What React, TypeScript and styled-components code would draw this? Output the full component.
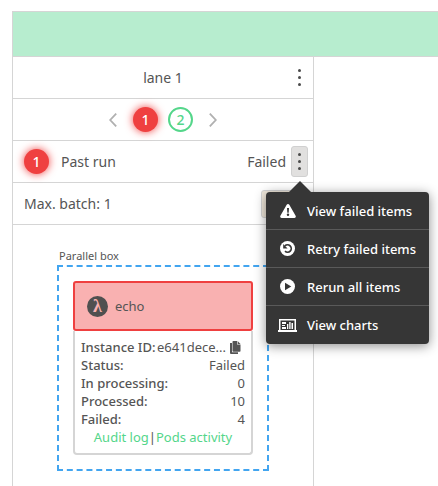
import React from 'react';
import styled, { createGlobalStyle, css } from 'styled-components';

const line = '#d5d5d5';
const ink = '#555555';
const red = '#ef4040';
const green = '#54d68a';
const dark = '#363636';

const GlobalStyle = createGlobalStyle`
  *, *::before, *::after { box-sizing: border-box; }
  body {
    margin: 0;
    background: #fff;
    color: ${ink};
    font: 14px/20px "Noto Sans", "Open Sans", sans-serif;
    overflow: hidden;
  }
  button { font: inherit; color: inherit; border: 0; padding: 0; background: none; cursor: pointer; }
`;

const Board = styled.main`
  display: flex;
  flex-direction: column;
  min-height: 100vh;
  padding: 11px 0 0 12px;
`;

const Banner = styled.header`
  height: 46px;
  border: 1px solid ${line};
  border-right: 0;
  background: #b7edcf;
`;

const Lane = styled.section`
  flex: 1;
  width: 302px;
  border: solid ${line};
  border-width: 0 1px;
`;

const Row = styled.div<{ $center?: boolean }>`
  display: flex;
  align-items: center;
  height: 42px;
  padding: 0 5px 0 11px;
  border-bottom: 1px solid ${line};
  ${(p) => p.$center && css`justify-content: center; padding: 0;`}
`;

const LaneHead = styled(Row)`
  display: grid;
  grid-template-columns: 17px 1fr 17px;
  padding: 0 5px;
`;

const LaneTitle = styled.h1`
  grid-column: 2;
  margin: 0;
  font-size: 14px;
  font-weight: 400;
  text-align: center;
`;

const Grow = styled.span`
  flex: 1;
  padding-left: 12px;
`;

const Label = styled.span`
  flex: 1;
`;

const KebabButton = styled.button<{ $open?: boolean }>`
  display: flex;
  flex-direction: column;
  align-items: center;
  justify-content: center;
  gap: 4px;
  width: 17px;
  height: 31px;
  border-radius: 3px;
  ${(p) => p.$open && css`&& { background: #e1e0df; border: 1px solid #d0d0d0; }`}
`;

const Dot = styled.i`
  width: 3px;
  height: 3px;
  border-radius: 50%;
  background: #4a4a4a;
`;

const Pager = styled.nav`
  display: flex;
  align-items: center;
  gap: 16px;
`;

const Runs = styled.div`
  display: flex;
  gap: 10px;
`;

const badge = css<{ $failed?: boolean }>`
  display: flex;
  align-items: center;
  justify-content: center;
  width: 25px;
  height: 25px;
  border-radius: 50%;
  font-size: 14px;
  font-weight: 500;
  ${(p) =>
    p.$failed
      ? css`background: ${red}; color: #fff; box-shadow: 0 0 8px ${red};`
      : css`border: 2px solid ${green}; color: ${green};`}
`;

const RunButton = styled.button<{ $failed?: boolean }>`
  && { ${badge} }
`;

const RunBadge = styled.span<{ $failed?: boolean }>`
  ${badge}
`;

const Arrow = styled.button`
  && {
    display: flex;
    color: #b0b0b0;
  }
`;

const BatchButton = styled.button`
  && {
    width: 47px;
    height: 28px;
    border: 1px solid ${line};
    border-radius: 3px;
    background: #f1e9dc;
  }
`;

const MenuAnchor = styled.div`
  position: relative;
  margin-left: 5px;
`;

const Menu = styled.div`
  position: absolute;
  z-index: 1;
  top: 46px;
  left: -25px;
  width: max-content;
  border-radius: 4px;
  background: ${dark};
  box-shadow: 0 2px 12px rgba(0, 0, 0, 0.45);
  &::before {
    content: '';
    position: absolute;
    top: -11px;
    left: 23px;
    border: solid transparent;
    border-width: 0 11px 11px;
    border-bottom-color: ${dark};
  }
`;

const MenuItem = styled.button`
  && {
    display: grid;
    grid-template-columns: 19px auto;
    align-items: center;
    justify-items: start;
    justify-content: start;
    gap: 10px;
    width: 100%;
    height: 38px;
    padding: 0 13px 0 12px;
    color: #fff;
    font-size: 13px;
    font-weight: 500;
  }
  & > svg { justify-self: center; }
  &&:not(:last-child) { border-bottom: 1px solid #5a5a5a; }
`;

const Diagram = styled.div`
  padding: 22px 44px 15px;
`;

const BoxLabel = styled.h2`
  margin: 0 0 0 2px;
  font-size: 11px;
  line-height: 18px;
  font-weight: 400;
`;

const ParallelBox = styled.div`
  padding: 14px;
  border: 2px dashed #42a5f0;
`;

const CardHead = styled.div`
  display: flex;
  align-items: center;
  gap: 7px;
  height: 50px;
  padding: 0 12px;
  border: 2px solid ${red};
  border-radius: 3px;
  background: #f9b1b1;
  font-size: 13px;
`;

const Lambda = styled.span`
  display: flex;
  align-items: center;
  justify-content: center;
  width: 21px;
  height: 21px;
  border-radius: 50%;
  background: #505050;
  color: #f9b1b1;
  font: bold 18px/20px "Liberation Serif", serif;
`;

const CardBody = styled.div`
  padding: 7px 6px;
  border: 2px solid ${line};
  border-top: 0;
  border-radius: 0 0 4px 4px;
  font-size: 13px;
  line-height: 18px;
  white-space: nowrap;
`;

const Facts = styled.dl`
  margin: 0;
`;

const Fact = styled.div`
  display: flex;
  justify-content: space-between;
  dt { font-weight: 500; }
  dd { display: flex; align-items: center; gap: 4px; margin: 0; }
`;

const CopyButton = styled.button`
  display: flex;
  margin-right: 4px;
`;

const Links = styled.div`
  text-align: center;
  a { color: ${green}; text-decoration: none; }
`;

const Chevron = ({ d }: { d: string }) => (
  <svg width="8" height="14" viewBox="0 0 8 14" fill="none" stroke="currentColor" strokeWidth="1.8">
    <path d={d} />
  </svg>
);

const Kebab = ({ label, open }: { label: string; open?: boolean }) => (
  <KebabButton $open={open} aria-label={label} aria-expanded={open}>
    <Dot /><Dot /><Dot />
  </KebabButton>
);

const WarningIcon = () => (
  <svg width="16" height="14" viewBox="0 0 16 14">
    <path fill="#fff" d="M6.7.8a1.5 1.5 0 0 1 2.6 0l6.3 10.9a1.5 1.5 0 0 1-1.3 2.3H1.7a1.5 1.5 0 0 1-1.3-2.3z" />
    <path fill={dark} d="M7 4h2l-.3 4.7H7.3z" />
    <circle cx="8" cy="10.8" r="1.2" fill={dark} />
  </svg>
);

const RetryIcon = () => (
  <svg width="15" height="15" viewBox="0 0 15 15">
    <circle cx="7.5" cy="7.5" r="7.5" fill="#fff" />
    <path fill="none" stroke={dark} strokeWidth="1.7" d="M4.9 4.9A3.7 3.7 0 1 1 5 10.2" />
    <path fill={dark} d="M3.2 3v4.4h4.4z" />
  </svg>
);

const PlayIcon = () => (
  <svg width="15" height="15" viewBox="0 0 15 15">
    <circle cx="7.5" cy="7.5" r="7.5" fill="#fff" />
    <path fill={dark} d="M5 3.8v7.4l6.3-3.7z" />
  </svg>
);

const ChartsIcon = () => (
  <svg width="19" height="13" viewBox="0 0 19 13">
    <path fill="#fff" fillRule="evenodd" d="M1 0h17v11h1v2H0v-2h1zM2.500 1.500V11h14V1.500z" />
    <path fill="#fff" d="M4 3h4v2H4zM4 6h3v1H4zM4 8h4v2H4zM9 5h1.300v5H9zM11.200 3h1.400v7h-1.400zM13.500 4H15v6h-1.500z" />
  </svg>
);

const CopyIcon = () => (
  <svg width="11" height="13" viewBox="0 0 11 13">
    <path fill={ink} d="M0 2h2v9.200h6V13H1a1 1 0 0 1-1-1z" />
    <path fill={ink} d="M3.300 0H7v3.500h3.500V10a.8.8 0 0 1-.8.800H3.300a.8.8 0 0 1-.8-.800V.800a.8.8 0 0 1 .8-.800zM7.600 0l2.900 2.900H7.600z" />
  </svg>
);

const menuItems = [
  { text: 'View failed items', Icon: WarningIcon },
  { text: 'Retry failed items', Icon: RetryIcon },
  { text: 'Rerun all items', Icon: PlayIcon },
  { text: 'View charts', Icon: ChartsIcon },
];

const facts = [
  ['Status:', 'Failed'],
  ['In processing:', '0'],
  ['Processed:', '10'],
  ['Failed:', '4'],
];

export default function App() {
  return (
    <>
      <GlobalStyle />
      <Board>
        <Banner />
        <Lane>
          <LaneHead>
            <LaneTitle>lane 1</LaneTitle>
            <Kebab label="Lane actions" />
          </LaneHead>
          <Row $center>
            <Pager aria-label="Runs">
              <Arrow aria-label="Previous"><Chevron d="M7.200.6 1.200 7l6 6.400" /></Arrow>
              <Runs>
                <RunButton $failed>1</RunButton>
                <RunButton>2</RunButton>
              </Runs>
              <Arrow aria-label="Next"><Chevron d="M.8.6 6.800 7l-6 6.400" /></Arrow>
            </Pager>
          </Row>
          <Row>
            <RunBadge $failed>1</RunBadge>
            <Grow>Past run</Grow>
            <span>Failed</span>
            <MenuAnchor>
              <Kebab label="Run actions" open />
              <Menu role="menu">
                {menuItems.map(({ text, Icon }) => (
                  <MenuItem key={text} role="menuitem">
                    <Icon />
                    <span>{text}</span>
                  </MenuItem>
                ))}
              </Menu>
            </MenuAnchor>
          </Row>
          <Row>
            <Label>Max. batch: 1</Label>
            <BatchButton aria-label="Edit max. batch" />
          </Row>
          <Diagram>
            <BoxLabel>Parallel box</BoxLabel>
            <ParallelBox>
              <CardHead>
                <Lambda aria-hidden>λ</Lambda>
                <span>echo</span>
              </CardHead>
              <CardBody>
                <Facts>
                  <Fact>
                    <dt>Instance ID:</dt>
                    <dd>
                      e641dece...
                      <CopyButton aria-label="Copy instance ID"><CopyIcon /></CopyButton>
                    </dd>
                  </Fact>
                  {facts.map(([name, value]) => (
                    <Fact key={name}>
                      <dt>{name}</dt>
                      <dd>{value}</dd>
                    </Fact>
                  ))}
                </Facts>
                <Links>
                  <a href="#audit-log">Audit log</a>|<a href="#pods-activity">Pods activity</a>
                </Links>
              </CardBody>
            </ParallelBox>
          </Diagram>
        </Lane>
      </Board>
    </>
  );
}
